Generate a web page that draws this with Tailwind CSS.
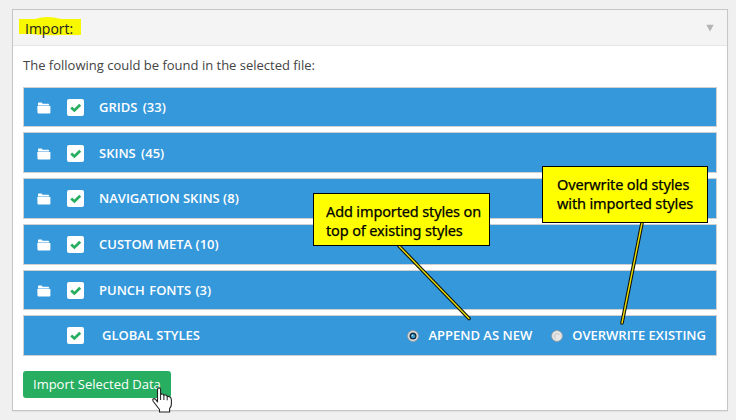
<!DOCTYPE html>
<html lang="en">
<head>
<meta charset="utf-8">
<title>Import</title>
<script src="https://cdn.jsdelivr.net/npm/@tailwindcss/browser@4"></script>
</head>
<body class="relative h-[420px] w-[736px] overflow-hidden bg-[#f0f0f0] pt-[9px] pl-3 font-['Open_Sans',sans-serif]">
<svg class="hidden">
  <symbol id="folder" viewBox="0 0 14 12"><path fill="#fff" d="M1 3.6V1.3Q1 .6 1.7.6H4.6L5.6 1.8H11.4Q12.2 1.8 12.3 3.6Z"/><path fill="#fff" d="M.3 4.1H13.4V10.4Q13.4 11.4 12.5 11.4H1.5Q.6 11.4.5 10.4Z"/></symbol>
  <symbol id="check" viewBox="0 0 17 17"><path fill="none" stroke="#27ae60" stroke-width="2.8" d="M4.2 8.4L7.4 11.4L13.2 5.8"/></symbol>
</svg>
<main class="h-[402px] w-[716px] border border-[#c6c6c6] bg-white shadow-[0_1px_1px_rgba(0,0,0,.05)]">
  <header class="flex h-[36px] items-center justify-between border-b border-[#e5e5e5] bg-[#f4f4f4] pr-[13px] pl-[6px]">
    <h1 class="relative isolate h-[20px] w-[63px] pt-px pl-[6px] text-[14px] leading-[20px] text-[#222]">
      <svg class="absolute top-[-2px] left-0 -z-10" width="63" height="20" viewBox="0 0 63 20"><path fill="#f8f800" d="M0 3H16Q28-1 42 3H62V19H40Q28 20 12 18L0 18Z"/></svg>Import:</h1>
    <svg width="8" height="8" viewBox="0 0 8 8"><path fill="#b4b4b4" d="M.3.8H7.7L4 7.5Z"/></svg>
  </header>
  <div class="px-[10px] pt-[9px]">
    <p class="h-[32px] text-[13px] leading-[20px] text-[#444]">The following could be found in the selected file:</p>
    <div class="flex flex-col gap-[5px] text-[13px] font-semibold text-white">
      <div class="flex h-[40px] items-center border border-[#d0d0d0] bg-[#3598db] pt-px pl-[13px]"><svg class="mr-[16px]" width="14" height="12"><use href="#folder"/></svg><span class="mr-[15px] size-[17px] rounded-[2px] bg-white"><svg width="17" height="17"><use href="#check"/></svg></span><span class="[word-spacing:2px]">GRIDS (33)</span></div>
      <div class="flex h-[41px] items-center border border-[#d0d0d0] bg-[#3598db] pt-[2px] pl-[13px]"><svg class="mr-[16px]" width="14" height="12"><use href="#folder"/></svg><span class="mr-[15px] size-[17px] rounded-[2px] bg-white"><svg width="17" height="17"><use href="#check"/></svg></span><span class="[word-spacing:2px]">SKINS (45)</span></div>
      <div class="flex h-[41px] items-center border border-[#d0d0d0] bg-[#3598db] pl-[13px]"><svg class="mr-[16px]" width="14" height="12"><use href="#folder"/></svg><span class="mr-[15px] size-[17px] rounded-[2px] bg-white"><svg width="17" height="17"><use href="#check"/></svg></span><span>NAVIGATION SKINS (8)</span></div>
      <div class="flex h-[41px] items-center border border-[#d0d0d0] bg-[#3598db] pl-[13px]"><svg class="mr-[16px]" width="14" height="12"><use href="#folder"/></svg><span class="mr-[15px] size-[17px] rounded-[2px] bg-white"><svg width="17" height="17"><use href="#check"/></svg></span><span>CUSTOM META (10)</span></div>
      <div class="flex h-[40px] items-center border border-[#d0d0d0] bg-[#3598db] pt-px pl-[13px]"><svg class="mr-[16px]" width="14" height="12"><use href="#folder"/></svg><span class="mr-[15px] size-[17px] rounded-[2px] bg-white"><svg width="17" height="17"><use href="#check"/></svg></span><span class="[word-spacing:1px]">PUNCH FONTS (3)</span></div>
      <div class="flex h-[41px] items-center border border-[#d0d0d0] bg-[#3598db] pr-[10px] pl-[43px]"><span class="mr-[18px] size-[17px] rounded-[2px] bg-white"><svg width="17" height="17"><use href="#check"/></svg></span><span>GLOBAL STYLES</span>
        <span class="ml-auto flex items-center"><svg class="mr-[9px]" width="12" height="12" viewBox="0 0 12 12"><circle cx="6" cy="6" r="5.4" fill="#e8e8e8" stroke="#a09c98" stroke-width=".9"/><circle cx="6" cy="6" r="3.5" fill="#10283c"/><circle cx="6.1" cy="6.2" r="2.1" fill="#3a9bc8"/><circle cx="5.3" cy="5.2" r=".8" fill="#c0e4f4"/></svg>APPEND AS NEW</span>
        <span class="ml-[19px] flex items-center"><svg class="mr-[9px]" width="12" height="12" viewBox="0 0 12 12"><circle cx="6" cy="6" r="5.4" fill="#eeeeee" stroke="#a09c98" stroke-width=".9"/><circle cx="6" cy="6" r="3.6" fill="#d4d4d6"/><circle cx="7" cy="7" r="2.4" fill="#e8e8e8"/></svg>OVERWRITE EXISTING</span>
      </div>
    </div>
    <button class="mt-[15px] h-[27px] w-[148px] rounded-[3px] bg-[#27ae60] pl-[10px] text-left text-[13px] leading-[27px] whitespace-nowrap text-white">Import Selected Data</button>
  </div>
</main>
<svg class="absolute inset-0" width="736" height="420" viewBox="0 0 736 420" fill="none" stroke-linecap="round">
  <path stroke="#111" stroke-width="3.6" d="M399 246L469 318.5M642 223L622 323"/>
  <path stroke="#e8e000" stroke-width="1.4" d="M399 246L469 318.5M642 223L622 323"/>
</svg>
<aside class="absolute top-[193px] left-[313px] h-[53px] w-[177px] border border-black bg-[#ff0] pt-[8px] pl-[12px] font-['Noto_Sans',sans-serif] text-[14.5px] leading-[19px] tracking-[-0.13px] whitespace-nowrap text-black [-webkit-text-stroke:0.25px_black]">Add imported styles on<br>top of existing styles</aside>
<aside class="absolute top-[166px] left-[542px] h-[57px] w-[166px] border border-black bg-[#ff0] pt-[8px] pl-[14px] font-['Noto_Sans',sans-serif] text-[14.5px] leading-[19px] tracking-[-0.13px] whitespace-nowrap text-black [-webkit-text-stroke:0.25px_black]">Overwrite old styles<br>with imported styles</aside>
<svg class="absolute top-[387px] left-[151px]" width="22" height="27" viewBox="0 0 22 27"><path fill="#fff" stroke="#222" stroke-width="1.1" stroke-linejoin="round" d="M6.5 15V2.5Q6.5.9 8 .9T9.6 2.5V7.6Q10.4 6.7 11.5 7Q12.6 7.2 12.8 8.4Q13.8 7.6 15 8Q16 8.4 16.2 9.6Q17.6 9 18.6 9.8Q20.4 10.8 20.4 13V17Q20.4 19.5 18.6 21.5V25H8.5V22.5L2.3 14.5Q1.2 12.8 2.1 12Q3.3 11.2 4.6 12.4Z"/><path stroke="#222" stroke-width="1" d="M9.6 7.6V13M12.9 8.4V13M16.2 9.6V13.3"/></svg>
</body>
</html>
